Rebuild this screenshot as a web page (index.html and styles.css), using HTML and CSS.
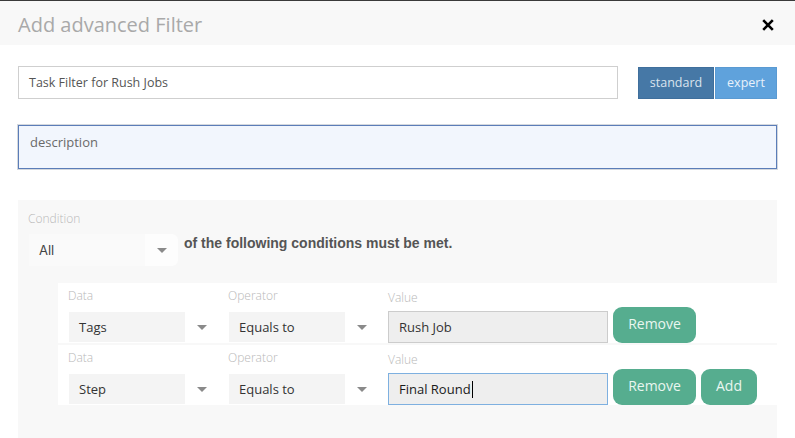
FILE: index.html
```html
<!DOCTYPE html>
<html>
<head>
<meta charset="utf-8">
<link rel="stylesheet" href="styles.css">
</head>
<body>
<div class="modal">
  <div class="header">
    <h1 class="title">Add advanced Filter</h1>
    <svg class="close" width="12" height="12" viewBox="0 0 12 12"><path d="M1.2 1.2 L10.8 10.8 M10.8 1.2 L1.2 10.8" stroke="#000" stroke-width="2.6" fill="none"/></svg>
  </div>
  <div class="body">
    <div class="name-row">
      <div class="name-input">Task Filter for Rush Jobs</div>
      <div class="mode-group">
        <div class="mode mode-standard">standard</div>
        <div class="mode mode-expert">expert</div>
      </div>
    </div>
    <div class="description">description</div>
    <div class="panel">
      <div class="label">Condition</div>
      <div class="cond-row">
        <div class="select select-cond"><span class="select-text">All</span><span class="select-arrow"><i class="tri"></i></span></div>
        <div class="cond-text">of the following conditions must be met.</div>
      </div>
      <div class="rules">
        <div class="rule">
          <div class="col col-sel">
            <div class="label">Data</div>
            <div class="select"><span class="select-text">Tags</span><span class="select-arrow"><i class="tri"></i></span></div>
          </div>
          <div class="col col-sel">
            <div class="label">Operator</div>
            <div class="select"><span class="select-text">Equals to</span><span class="select-arrow"><i class="tri"></i></span></div>
          </div>
          <div class="col col-val">
            <div class="label">Value</div>
            <div class="value">Rush Job</div>
          </div>
          <div class="btn">Remove</div>
        </div>
        <div class="rule">
          <div class="col col-sel">
            <div class="label">Data</div>
            <div class="select"><span class="select-text">Step</span><span class="select-arrow"><i class="tri"></i></span></div>
          </div>
          <div class="col col-sel">
            <div class="label">Operator</div>
            <div class="select"><span class="select-text">Equals to</span><span class="select-arrow"><i class="tri"></i></span></div>
          </div>
          <div class="col col-val">
            <div class="label">Value</div>
            <div class="value value-focus">Final Round<span class="caret"></span></div>
          </div>
          <div class="btn">Remove</div>
          <div class="btn btn-add">Add</div>
        </div>
      </div>
    </div>
  </div>
</div>
</body>
</html>
```

FILE: styles.css
```css
* { box-sizing: border-box; }
html, body { margin: 0; padding: 0; background: #fff; }
body {
  font-family: "Open Sans", "Liberation Sans", sans-serif;
  color: #333;
  width: 795px;
  height: 438px;
  overflow: hidden;
}
.header {
  height: 45px;
  border-top: 1px solid #3a3a3a;
  background: #f8f8f8;
  display: flex;
  align-items: center;
  justify-content: space-between;
  padding: 0 21px 0 18px;
}
.title {
  margin: 0;
  font-size: 20px;
  font-weight: 400;
  color: #a9a9a9;
  line-height: 24px;
  position: relative;
  top: 2px;
}
.close { display: block; margin-top: 3px; }
.body { padding: 0 18px; }
.name-row {
  margin-top: 21px;
  display: flex;
  align-items: center;
}
.name-input {
  width: 600px;
  height: 33px;
  border: 1px solid #cfcfcf;
  padding: 0 10px;
  font-size: 12.5px;
  line-height: 31px;
  color: #555;
}
.mode-group { display: flex; margin-left: 20px; gap: 1px; margin-top: 1px; }
.mode {
  height: 32px;
  font-size: 12.5px;
  text-align: center;
}
.mode-standard { width: 76px; background: #4678a6; color: #dbe4ee; border: 1px solid #3f6f9c; line-height: 30px; }
.mode-expert { width: 62px; background: #5fa2dc; color: #e8f1fa; border: 1px solid #5a9ad2; line-height: 30px; }
.description {
  margin-top: 26px;
  height: 44px;
  border: 1px solid #5b7db8;
  box-shadow: 0 0 0 1px #d4d8de;
  background: #f2f6fd;
  padding: 7px 11px;
  font-size: 13px;
  line-height: 18px;
  color: #6a6a6a;
}
.panel {
  margin-top: 31px;
  background: #f8f8f8;
  padding: 10px 0 40px 10px;
}
.label {
  font-size: 12px;
  font-weight: 300;
  line-height: 16px;
  color: #b8b8b8;
}
.panel > .label { margin-bottom: 8px; position: relative; top: 1px; }
.cond-row { display: flex; align-items: flex-start; padding-left: 1px; }
.select {
  width: 149px;
  height: 30px;
  display: flex;
  font-size: 13px;
  color: #333;
}
.select-text {
  width: 116px;
  background: #f4f4f4;
  padding-left: 10px;
  line-height: 30px;
}
.select-arrow {
  flex: 1;
  display: flex;
  align-items: center;
  justify-content: center;
}
.tri {
  display: block;
  width: 0;
  height: 0;
  border-left: 5px solid transparent;
  border-right: 5px solid transparent;
  border-top: 5px solid #8a8a8a;
  margin-left: 1px;
}
.select-cond { height: 32px; border-radius: 0 6px 6px 0; background: #fdfdfd; }
.select-cond .select-text { background: #fafafa; line-height: 32px; font-family: "Inter", "Open Sans", sans-serif; font-size: 13px; color: #444; }
.cond-text {
  margin-left: 6px;
  font-family: "Liberation Sans", Arial, sans-serif;
  font-weight: bold;
  font-size: 14px;
  line-height: 18px;
  color: #555;
}
.rules {
  margin-top: 17px;
  margin-left: 30px;
  display: flex;
  flex-direction: column;
  gap: 2px;
}
.rule {
  height: 60px;
  background: #fff;
  display: flex;
  align-items: flex-end;
  padding-left: 10px;
}
.col { display: flex; flex-direction: column; }
.col-sel { margin-right: 10px; }
.col-sel .label { margin-bottom: 9px; position: relative; top: 1px; }
.col-sel .select { margin-bottom: 1px; margin-left: 1px; }
.col-val .label { margin-bottom: 6px; position: relative; top: 1px; }
.value {
  width: 220px;
  height: 32px;
  background: #eee;
  border: 1px solid #ccc;
  padding-left: 10px;
  font-size: 13px;
  line-height: 30px;
  color: #333;
}
.value-focus { border-color: #7eb0e0; color: #1a1a1a; }
.caret {
  display: inline-block;
  width: 1px;
  height: 17px;
  background: #000;
  vertical-align: middle;
  margin-left: 1px;
  position: relative;
  top: -1px;
}
.btn {
  height: 36px;
  margin-left: 5px;
  background: #56ad8f;
  border-radius: 9px;
  color: #e9f6f0;
  font-size: 14px;
  line-height: 34px;
  width: 83px;
  text-align: center;
}
.btn-add { width: 56px; }
```
